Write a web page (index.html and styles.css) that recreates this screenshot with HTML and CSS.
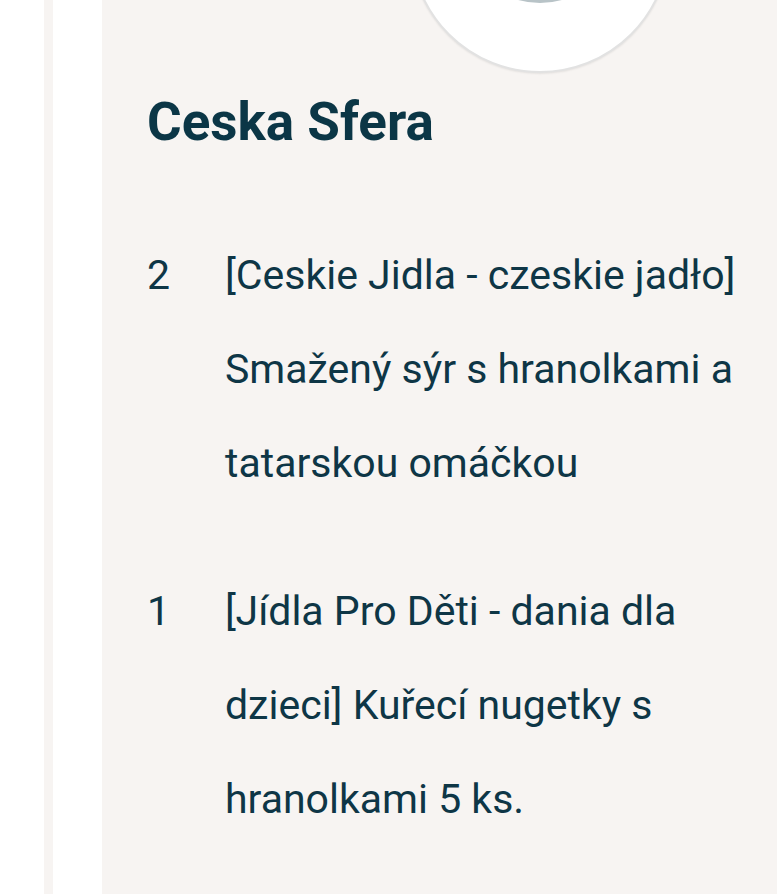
FILE: index.html
```html
<!DOCTYPE html>
<html>

<head>
    <title>Ceska Sfera</title>
    <link rel="stylesheet" href="styles.css">
</head>

<body>
    <div class="page">
        <div class="gutter"></div>
        <div class="rail"></div>
        <div class="spacer"></div>
        <div class="panel">
            <div class="avatar">
                <div class="avatar-head"></div>
            </div>
            <h1 class="shop">Ceska Sfera</h1>

            <div class="items">
                <div class="item">
                    <span class="qty">2</span>
                    <span class="name">[Ceskie Jidla - czeskie jadło] Smažený sýr s hranolkami a tatarskou omáčkou</span>
                </div>
                <div class="item">
                    <span class="qty">1</span>
                    <span class="name">[Jídla Pro Děti - dania dla dzieci] Kuřecí nugetky s hranolkami 5 ks.</span>
                </div>
            </div>
        </div>
    </div>
</body>

</html>
```

FILE: styles.css
```css
body {
    margin: 0;
    background: #fff;
    font-family: Roboto, "Noto Sans", sans-serif;
    color: #0e3646;
    overflow: hidden;
}

.page {
    display: flex;
    height: 894px;
}

.gutter {
    width: 44px;
}

.rail {
    width: 9px;
    background-color: #f7f4f2;
}

.spacer {
    width: 49px;
}

.panel {
    flex: 1;
    background-color: #f7f4f2;
    padding: 0 20px 0 45px;
    overflow: hidden;
}

.avatar {
    width: 256px;
    height: 256px;
    margin: -187px 0 0 263px;
    border-radius: 50%;
    background: #fff;
    border: 2px solid #e2e2e2;
    box-shadow: 0 1px 2px rgba(0, 0, 0, 0.08);
    overflow: hidden;
    display: flex;
    justify-content: center;
}

.avatar-head {
    width: 140px;
    height: 120px;
    border-radius: 50%;
    background-color: #b8c3c7;
    margin-top: 68px;
    flex-shrink: 0;
}

.shop {
    margin: 18px 0 0 0;
    font-size: 53px;
    font-weight: bold;
    line-height: 62px;
    color: #0b3646;
}

.items {
    margin-top: 75px;
}

.item {
    display: flex;
    font-size: 41px;
    line-height: 94px;
    margin-bottom: 54px;
}

.qty {
    width: 78px;
    flex-shrink: 0;
}

.name {
    flex: 1;
}
```
